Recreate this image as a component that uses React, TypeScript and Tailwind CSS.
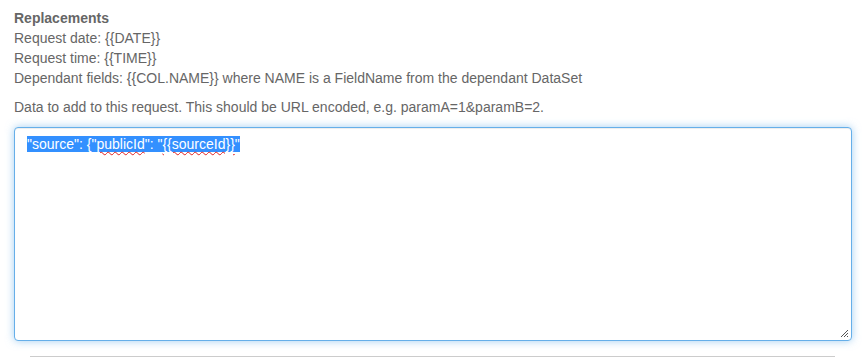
import React from 'react';

function ResizeGrip() {
  return (
    <svg width="10" height="10" viewBox="0 0 10 10" className="absolute right-[2px] bottom-[2px]">
      <path d="M9 2 L2 9 M9 5 L5 9 M9 8 L8 9" stroke="#555" strokeWidth="1" fill="none" />
    </svg>
  );
}

export default function App() {
  return (
    <div className="bg-white w-[864px] h-[357px] overflow-hidden px-[14px] pt-[8px] text-[14px] leading-[20px] text-[#666] font-['Liberation_Sans',Arial,sans-serif]">
      <div className="font-bold">Replacements</div>
      <div>Request date: {'{{DATE}}'}</div>
      <div>Request time: {'{{TIME}}'}</div>
      <div>Dependant fields: {'{{COL.NAME}}'} where NAME is a FieldName from the dependant DataSet</div>
      <p className="mt-[9px]">Data to add to this request. This should be URL encoded, e.g. paramA=1&amp;paramB=2.</p>

      <div className="relative mt-[10px] w-[838px] h-[214px] rounded-[4px] border border-[#66afe9] bg-white px-[12px] py-[6px] shadow-[inset_0_1px_1px_rgba(0,0,0,0.075),0_0_8px_rgba(102,175,233,0.6)]">
        <span className="bg-[#3390ff] text-white">
          "source": {'{'}"
          <span className="underline decoration-wavy decoration-[#e02020] decoration-1 underline-offset-[2px]">publicId</span>
          ": "
          <span className="underline decoration-wavy decoration-[#e02020] decoration-1 underline-offset-[2px]">{'{{sourceId}}'}</span>
          "
        </span>
        <ResizeGrip />
      </div>

      <div className="mt-[15px] ml-[16px] mr-[15px] border-t border-[#cccccc]" />
    </div>
  );
}
